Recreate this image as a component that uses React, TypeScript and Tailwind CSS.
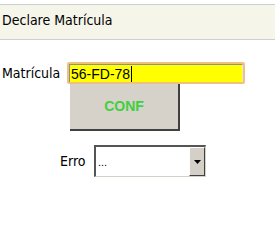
export default function App() {
  return (
    <div className="h-[249px] w-[275px] bg-white font-['DejaVu_Sans_Condensed','DejaVu_Sans',sans-serif] text-[14px] text-black">
      {/* title bar */}
      <div className="mt-[4px] h-[36px] border-y border-[#cfcfcf] bg-[#f5f5ea] pl-[2px] pt-[7px] leading-[17px]">
        Declare Matrícula
      </div>

      {/* matricula row */}
      <div className="mt-[22px] flex items-center">
        <span className="w-[67px] shrink-0 pl-[2px] leading-[17px]">Matrícula</span>
        <div className="h-[22px] w-[178px] rounded-[2px] border-2 border-[#eec27c]">
          <div className="flex h-full items-center border-t border-l border-[#8f8f8f] border-r border-r-[#e6e6e6] bg-[#ffff00] pl-[1px] font-['Liberation_Sans',Arial,sans-serif] text-[14px] leading-[16px]">
            56-FD-78
            <span className="ml-[1px] h-[16px] w-px bg-black" />
          </div>
        </div>
      </div>

      {/* button */}
      <div className="ml-[70px] mt-[-1px] flex h-[48px] w-[110px] items-center justify-center border-r-2 border-b-2 border-r-[#404040] border-b-[#404040] bg-[#d6d2ca] font-['Liberation_Sans',Arial,sans-serif] text-[14px] font-bold text-[#3fcf3f]">
        CONF
      </div>

      {/* erro row */}
      <div className="mt-[14px] flex items-center">
        <span className="ml-[60px] w-[34px] shrink-0 leading-[17px]">Erro</span>
        <div className="flex h-[32px] w-[112px] border-t-2 border-l-2 border-t-[#555] border-l-[#555] border-b border-r border-b-[#d4d0c8] border-r-[#d4d0c8] bg-white">
          <div className="flex flex-1 items-center pl-[2px] pt-[2px] font-['Liberation_Sans',Arial,sans-serif] text-[11px] text-black">
            ...
          </div>
          <div className="flex w-[16px] items-center justify-center border-r border-b border-[#404040] border-t border-l border-t-white border-l-white bg-[#d4d0c8]">
            <svg width="7" height="4" viewBox="0 0 7 4">
              <path d="M0 0h7L3.5 4z" fill="#000" />
            </svg>
          </div>
        </div>
      </div>
    </div>
  );
}
